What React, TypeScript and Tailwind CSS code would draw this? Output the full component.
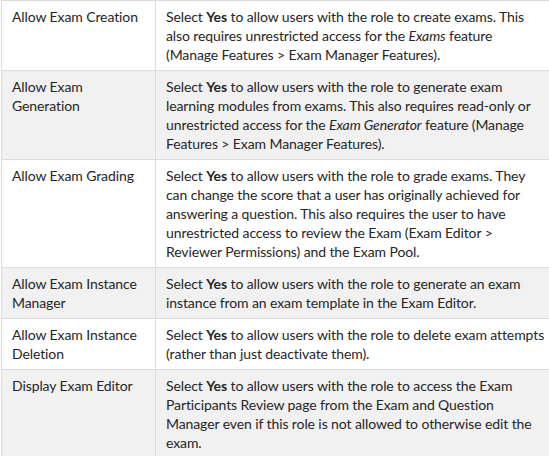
const rows: { name: string; desc: React.ReactNode }[] = [
  {
    name: "Allow Exam Creation",
    desc: (
      <>
        Select <b>Yes</b> to allow users with the role to create exams. This also requires unrestricted access for the{" "}
        <i>Exams</i> feature (Manage Features &gt; Exam Manager Features).
      </>
    ),
  },
  {
    name: "Allow Exam Generation",
    desc: (
      <>
        Select <b>Yes</b> to allow users with the role to generate exam learning modules from exams. This also requires
        read-only or unrestricted access for the <i>Exam Generator</i> feature (Manage Features &gt; Exam Manager
        Features).
      </>
    ),
  },
  {
    name: "Allow Exam Grading",
    desc: (
      <>
        Select <b>Yes</b> to allow users with the role to grade exams. They can change the score that a user has
        originally achieved for answering a question. This also requires the user to have unrestricted access to review
        the Exam (Exam Editor &gt; Reviewer Permissions) and the Exam Pool.
      </>
    ),
  },
  {
    name: "Allow Exam Instance Manager",
    desc: (
      <>
        Select <b>Yes</b> to allow users with the role to generate an exam instance from an exam template in the Exam
        Editor.
      </>
    ),
  },
  {
    name: "Allow Exam Instance Deletion",
    desc: (
      <>
        Select <b>Yes</b> to allow users with the role to delete exam attempts (rather than just deactivate them).
      </>
    ),
  },
  {
    name: "Display Exam Editor",
    desc: (
      <>
        Select <b>Yes</b> to allow users with the role to access the Exam Participants Review page from the Exam and
        Question Manager even if this role is not allowed to otherwise edit the exam.
      </>
    ),
  },
];

export default function App() {
  return (
    <div className="w-[549px] h-[456px] bg-white overflow-hidden">
      <table
        className="w-[548px] border-collapse text-[14px] leading-[19px] text-[#262626] ml-px tracking-[-0.1px]"
        style={{ fontFamily: "Lato, 'Open Sans', sans-serif" }}
      >
        <colgroup>
          <col className="w-[154px]" />
          <col />
        </colgroup>
        <tbody>
          {rows.map((r, i) => (
            <tr key={r.name} className={i % 2 === 1 ? "bg-[#f1f1f1]" : "bg-white"}>
              <td className="border border-[#dcdcdc] align-top pl-[10px] pr-2 pt-[6px] pb-[6px]">{r.name}</td>
              <td className="border border-[#dcdcdc] border-r-0 align-top pl-[10px] pr-1 pt-[6px] pb-[6px]">{r.desc}</td>
            </tr>
          ))}
        </tbody>
      </table>
    </div>
  );
}
